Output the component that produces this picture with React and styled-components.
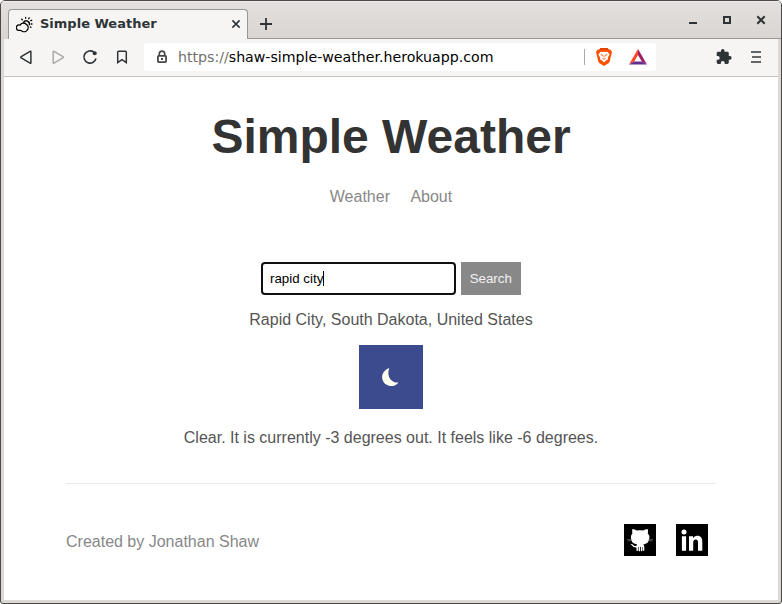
import React from 'react';
import styled, { createGlobalStyle } from 'styled-components';

const GlobalStyle = createGlobalStyle`
  *, *::before, *::after { box-sizing: border-box; }
  body { margin: 0; background: #fff; font-family: "Liberation Sans", Arial, sans-serif; }
  svg { display: block; flex: none; }
`;

const BrowserWindow = styled.div`
  width: 782px;
  height: 604px;
  display: flex;
  flex-direction: column;
  padding: 0 3px 3px;
  border: 1px solid #4d494b;
  border-radius: 5px 5px 3px 3px;
  background: #dcd8d4;
  overflow: hidden;
`;

const TitleBar = styled.div`
  flex: none;
  display: flex;
  height: 38px;
  margin: 0 -3px;
  padding: 8px 0 0 7px;
  background: linear-gradient(#e4e0dd, #d9d5d1);
  box-shadow: inset 0 1px #efedeb;
`;

const Tab = styled.div`
  display: flex;
  align-items: center;
  width: 240px;
  height: 30px;
  padding: 0 6px 1px 7px;
  border: 1px solid #999694;
  border-bottom: 0;
  border-radius: 4px 4px 0 0;
  background: #f6f5f4;
`;

const TabTitle = styled.span`
  flex: 1;
  margin-left: 7px;
  padding-bottom: 2px;
  font: bold 13px "DejaVu Sans", sans-serif;
  white-space: nowrap;
  color: #2e3436;
`;

const TabStrip = styled.div`
  flex: 1;
  display: flex;
  justify-content: space-between;
  height: 30px;
  padding: 0 13px 0 11px;
  border-bottom: 1px solid #999694;
`;

const NewTab = styled.div`
  padding-top: 8px;
`;

const WindowControls = styled.div`
  display: flex;
  gap: 20px;
  padding-top: 4px;
`;

const Toolbar = styled.div`
  flex: none;
  display: flex;
  align-items: center;
  height: 38px;
  padding: 0 14px 1px 14px;
  border-bottom: 1px solid #c6c1bb;
  background: #f6f5f4;
`;

const NavButtons = styled.div`
  display: flex;
  gap: 16px;
`;

const AddressBar = styled.div`
  display: flex;
  align-items: center;
  width: 512px;
  height: 28px;
  margin-left: 14px;
  padding: 0 8px 0 10px;
  border-radius: 3px;
  background: #fff;
`;

const Url = styled.span`
  flex: 1;
  margin-left: 8px;
  font: 14.17px "DejaVu Sans", sans-serif;
  white-space: nowrap;
  color: #000;
`;

const Scheme = styled.span`
  color: #707070;
`;

const Divider = styled.span`
  width: 1px;
  height: 16px;
  margin-right: 10px;
  background: #aaa;
`;

const Extensions = styled.div`
  display: flex;
  align-items: center;
  gap: ${({ $gap = 16 }) => $gap}px;
  margin-left: auto;
`;

const Page = styled.main`
  flex: 1;
  display: flex;
  flex-direction: column;
  align-items: center;
  padding: 32px 62px 0;
  background: #fff;
  color: #555;
  font-size: 16px;
  line-height: 18px;
`;

const Heading = styled.h1`
  margin: 0;
  font-size: 48px;
  line-height: 56px;
  color: #333;
`;

const SiteNav = styled.nav`
  display: flex;
  gap: 20.4px;
  margin-top: 23px;
`;

const NavLink = styled.a`
  color: #888;
`;

const SearchForm = styled.div`
  display: flex;
  gap: 5px;
  margin-top: 56px;
`;

const SearchField = styled.div`
  display: flex;
  align-items: center;
  width: 195px;
  height: 33px;
  padding-left: 7px;
  border: 2px solid #101010;
  border-radius: 4px;
  font-size: 13.333px;
  color: #000;
`;

const Caret = styled.span`
  width: 1px;
  height: 15px;
  background: #000;
`;

const SearchButton = styled.button`
  width: 60px;
  height: 33px;
  padding: 0 .5px 0 0;
  border: 0;
  background: #888;
  color: #f2f2f2;
  font: 13.333px "Liberation Sans", Arial, sans-serif;
`;

const Location = styled.p`
  margin: 16px 0 0;
`;

const WeatherIcon = styled.div`
  display: flex;
  align-items: center;
  justify-content: center;
  width: 64px;
  height: 64px;
  margin-top: 16px;
  background: #3c4a8e;
`;

const Conditions = styled.p`
  margin: 20px 0 0;
`;

const Footer = styled.footer`
  display: flex;
  align-items: flex-start;
  justify-content: space-between;
  width: 650px;
  margin-top: 36px;
  padding: 40px 8px 0 0;
  border-top: 1px solid #eaeaea;
`;

const Credit = styled.span`
  margin-top: 9px;
  color: #888;
`;

const SocialLinks = styled.div`
  display: flex;
  gap: 20px;
`;

const TriangleIcon = ({ back }) => (
  <svg width="16" height="16" viewBox="0 0 16 16" fill="none" stroke={back ? '#2e3436' : '#aaa'} strokeWidth="1.5" strokeLinejoin="round">
    <path d={back ? 'M12.900 2.800v10.900q0 .9-.8.4L3.200 8.900q-.8-.6 0-1.200l8.900-5.400q.8-.4.8.5Z' : 'M3.200 2.800v10.900q0 .9.8.4l8.900-5.200q.8-.6 0-1.200L4 2.300q-.8-.4-.8.5Z'} />
  </svg>
);

const FaviconIcon = () => (
  <svg width="17" height="17" viewBox="0 0 17 17" fill="none" stroke="#000" strokeWidth="1.300" strokeLinecap="round">
    <path d="M4.300 9.100A2.800 2.800 0 1 0 3.600 14.400C5.200 14.300 5 14.500 6.200 15.200A4 4 0 1 0 10 8.100C8.300 6.300 5 6.800 4.300 9.100" />
    <path d="M7.600 6.200a3.200 3.200 0 0 1 5.700 2.700" />
    <path d="m5.700 3.200.6.600M9.600 1.400v.8M13.200 1.900l-.5.900M15.700 4.300l-.8.400M16 8h-.8M14.900 11.300l-.5-.4" />
  </svg>
);

const LockIcon = () => (
  <svg width="16" height="16" viewBox="0 0 16 16" fill="none">
    <path d="M5.300 7V4.900a2.700 2.700 0 0 1 5.400 0V7" stroke="#484848" strokeWidth="1.700" />
    <rect x="3.900" y="6.900" width="8.200" height="6.200" rx=".8" stroke="#484848" strokeWidth="1.800" />
    <rect x="7" y="9" width="2" height="2" fill="#484848" />
  </svg>
);

const BraveIcon = () => (
  <svg width="18" height="20" viewBox="0 0 18 20">
    <path fill="#fb5000" d="M5.600 1h6.800l1.600 1.700 1.700-.2 1.300 2.700-.6 2-1.700 7.200q-.3 1-1.300 1.800L9 19l-4.400-2.800q-1-.8-1.300-1.800L1.600 7.200 1 5.200l1.300-2.700 1.700.2Z" />
    <path fill="#e44200" d="M5.600 1h6.800l1.600 1.700H4Z" />
    <path fill="#fff" d="m5.500 4.700 1.900.4L9 4.800l1.600.3 1.900-.4 2 2.500-.4 1.400-1.300 2 .2 1.600-1.900 1.300-2.100 1.900-2.100-1.900L5 12.200l.2-1.600-1.300-2-.4-1.400Z" />
    <path fill="none" stroke="#fb5000" strokeWidth=".8" d="m5.600 7.500 1.800.4-.2 1.400M12.400 7.500l-1.800.4.200 1.400M9 8.400v2M7.400 11.500l1.600.7 1.600-.7" />
  </svg>
);

const RewardsIcon = () => (
  <svg width="20" height="18" viewBox="0 0 20 18">
    <path fill="#ff4724" d="M10 1 1 16.500l5.200-3L10 7Z" />
    <path fill="#9e1f63" d="m10 1 9 15.500-5.200-3L10 7Z" />
    <path fill="#662d91" d="M1 16.500h18l-5.200-3H6.200Z" />
  </svg>
);

const PuzzleIcon = () => (
  <svg width="16" height="16" viewBox="1 1 22.500 22.500" fill="#2e3436">
    <path d="M20.500 11H19V7c0-1.100-.9-2-2-2h-4V3.500a2.500 2.500 0 0 0-5 0V5H4c-1.100 0-2 .9-2 2v3.800h1.500a2.700 2.700 0 0 1 0 5.400H2V20c0 1.100.9 2 2 2h3.800v-1.500a2.700 2.700 0 0 1 5.400 0V22H17c1.100 0 2-.9 2-2v-4h1.500a2.500 2.500 0 0 0 0-5Z" />
  </svg>
);

const GitHubIcon = () => (
  <svg width="32" height="32" viewBox="0 0 32 32">
    <rect width="32" height="32" fill="#000" />
    <path fill="#fff" d="M8.400 5q2.500.2 4.400 1.600 3.200-.6 6.400 0 2-1.400 4.400-1.600.8 2 .2 4.200 1.900 2 1.500 5.300-.6 5.300-6 6 1 1 1 2.500v3.600q-1.100.5-1.400-.4v-3.200h-.5v4.100q-1 .5-1.500-.3v-3.800h-.8V27q-.7.700-1.500 0v-4.100H14v3.400q-.4.900-1.500.4v-3.300q-3.700.2-4.600-2.200l-1.300-1q1.800-.5 2.800 1 1.100 1.200 3.100.5.200-.8.800-1.200-5.700-.7-6.300-6-.4-3.300 1.400-5.300-.6-2.200 0-4.200Z" />
    <path d="M3 15.300l5 .8M29 15.300l-5 .8M3.500 17l4.800-.6M28.500 17l-4.800-.6" stroke="#999" strokeWidth=".5" />
  </svg>
);

const LinkedInIcon = () => (
  <svg width="32" height="32" viewBox="0 0 32 32">
    <rect width="32" height="32" fill="#000" />
    <g fill="#fff">
      <circle cx="8" cy="8.100" r="2.500" />
      <path d="M5.900 12.200h4.200V26.700H5.900ZM13 12.200h4v2c.9-1.500 2.400-2.400 4.200-2.400 3.800 0 5.100 2.400 5.100 6.300v8.600H22v-7.600c0-2.100-.4-3.500-2.200-3.500-1.900 0-2.600 1.400-2.600 3.400v7.700H13Z" />
    </g>
  </svg>
);

export default function App() {
  return (
    <>
      <GlobalStyle />
      <BrowserWindow>
        <TitleBar>
          <Tab>
            <FaviconIcon />
            <TabTitle>Simple Weather</TabTitle>
            <svg width="10" height="10" viewBox="0 0 10 10" stroke="#2e3436" strokeWidth="1.600"><path d="m1.400 1.400 7.200 7.200m0-7.200-7.200 7.200" /></svg>
          </Tab>
          <TabStrip>
            <NewTab>
              <svg width="14" height="14" viewBox="0 0 14 14" stroke="#2e3436" strokeWidth="1.800"><path d="M1 7h12M7 1v12" /></svg>
            </NewTab>
            <WindowControls>
              <svg width="14" height="14" viewBox="0 0 14 14" fill="#2e3436"><path d="M3 9h8v2H3Z" /></svg>
              <svg width="14" height="14" viewBox="0 0 14 14" fill="none" stroke="#2e3436" strokeWidth="2"><path d="M4 4h6v6H4Z" /></svg>
              <svg width="14" height="14" viewBox="0 0 14 14" stroke="#2e3436" strokeWidth="2"><path d="m3.300 3.300 7.400 7.400m0-7.400-7.400 7.400" /></svg>
            </WindowControls>
          </TabStrip>
        </TitleBar>
        <Toolbar>
          <NavButtons>
            <TriangleIcon back />
            <TriangleIcon />
            <svg width="16" height="16" viewBox="0 0 16 16">
              <path d="M14 9.500a6.100 6.100 0 1 1-2.200-6.300" fill="none" stroke="#2e3436" strokeWidth="1.600" />
              <circle cx="12.700" cy="4.200" r="2" fill="#2e3436" />
            </svg>
            <svg width="16" height="16" viewBox="0 0 16 16" fill="none" stroke="#2e3436" strokeWidth="1.500"><path d="M3.700 13.500V3q0-.8.800-.8h7q.8 0 .8.800v10.500L8 10.600Z" /></svg>
          </NavButtons>
          <AddressBar>
            <LockIcon />
            <Url><Scheme>https://</Scheme>shaw-simple-weather.herokuapp.com</Url>
            <Divider />
            <Extensions $gap={15}>
              <BraveIcon />
              <RewardsIcon />
            </Extensions>
          </AddressBar>
          <Extensions>
            <PuzzleIcon />
            <svg width="16" height="16" viewBox="0 0 16 16" fill="#4a4e50"><path d="M3 2h10v2H3ZM4 7h9v2H4ZM3 12h10v2H3Z" opacity=".85" /></svg>
          </Extensions>
        </Toolbar>
        <Page>
          <Heading>Simple Weather</Heading>
          <SiteNav>
            <NavLink>Weather</NavLink>
            <NavLink>About</NavLink>
          </SiteNav>
          <SearchForm>
            <SearchField>rapid city<Caret /></SearchField>
            <SearchButton>Search</SearchButton>
          </SearchForm>
          <Location>Rapid City, South Dakota, United States</Location>
          <WeatherIcon>
            <svg width="20" height="20" viewBox="0 0 20 20"><path fill="#fffff0" d="M8.300 1C2.800 3 .3 7.800 1.400 12.300c2 7.700 12 9 16.100 3.200C11 16.300 5 10 8.300 1Z" /></svg>
          </WeatherIcon>
          <Conditions>Clear. It is currently -3 degrees out. It feels like -6 degrees.</Conditions>
          <Footer>
            <Credit>Created by Jonathan Shaw</Credit>
            <SocialLinks>
              <GitHubIcon />
              <LinkedInIcon />
            </SocialLinks>
          </Footer>
        </Page>
      </BrowserWindow>
    </>
  );
}
